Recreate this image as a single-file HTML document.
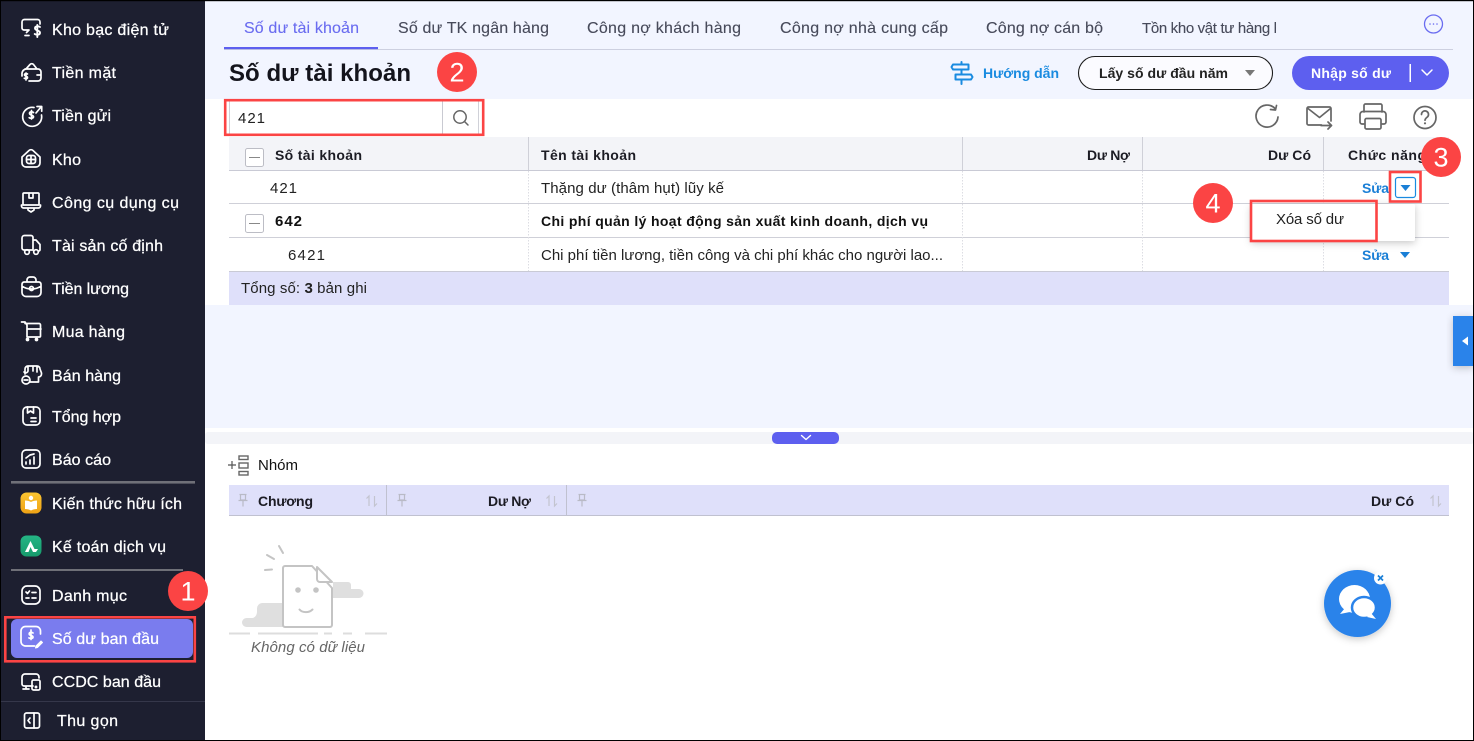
<!DOCTYPE html>
<html lang="vi"><head><meta charset="utf-8"><title>Số dư tài khoản</title>
<style>
html,body{margin:0;padding:0;background:#fff;width:1474px;height:741px;overflow:hidden}
svg{display:block;position:absolute;left:0;top:0}
text{font-family:"Liberation Sans",sans-serif;white-space:pre}
.n{font-size:16px;fill:#fff;stroke:#fff;stroke-width:.25}
.i{fill:none;stroke:#fff;stroke-width:1.7;stroke-linecap:round;stroke-linejoin:round}
.tab{font-size:16px;fill:#474a5a;stroke:#474a5a;stroke-width:.12}
.h{font-size:14px;font-weight:700;fill:#1c1c24}
.c{font-size:15px;fill:#222}
.b{font-size:14px;font-weight:700;fill:#111}
.a{font-size:14px;font-weight:700;fill:#1a7fd6}
.bn{font-size:27px;fill:#fff;font-weight:400;text-anchor:middle}
.g{fill:none;stroke:#666;stroke-width:1.7;stroke-linecap:round;stroke-linejoin:round}
.p{fill:none;stroke:#b9bac6;stroke-width:1.2}
.s{fill:none;stroke:#c3c4cf;stroke-width:1.2}
.d{stroke:#dcdde3;stroke-width:1;stroke-dasharray:1.5 1.5}
</style></head><body>
<svg width="1474" height="741" viewBox="0 0 1474 741" xmlns="http://www.w3.org/2000/svg">
<defs>
<clipPath id="tc"><rect x="1130" y="10" width="146" height="35"/></clipPath>
<filter id="sh" x="-30%" y="-30%" width="160%" height="170%"><feDropShadow dx="0" dy="2" stdDeviation="4" flood-color="#000" flood-opacity=".22"/></filter>
<linearGradient id="yl" x1="0" y1="0" x2="0" y2="1"><stop offset="0" stop-color="#fbc531"/><stop offset="1" stop-color="#eea215"/></linearGradient>
<linearGradient id="gr" x1="0" y1="0" x2="0" y2="1"><stop offset="0" stop-color="#25b585"/><stop offset="1" stop-color="#169a6c"/></linearGradient>
</defs>
<rect width="1474" height="741" fill="#fff"/>

<!-- main background -->
<rect x="205" y="0" width="1269" height="99" fill="#f2f5ff"/>
<rect x="205" y="305" width="1269" height="123" fill="#f2f5ff"/>
<rect x="205" y="432" width="1269" height="12" rx="3" fill="#f3f4f8"/>

<!-- sidebar -->
<rect x="0" y="0" width="205" height="741" fill="#1d1f30"/>
<rect x="11" y="481" width="184" height="2.6" fill="#6f7078"/>
<rect x="11" y="569" width="172" height="2" fill="#6f7078"/>
<rect x="1" y="701" width="204" height="1" fill="#35374a"/>
<rect x="11" y="619" width="182" height="39" rx="6" fill="#7a7cee"/>

<text class="n" x="52" y="35" textLength="117">Kho bạc điện tử</text>
<text class="n" x="52" y="78" textLength="64">Tiền mặt</text>
<text class="n" x="52" y="121" textLength="59">Tiền gửi</text>
<text class="n" x="52" y="165" textLength="29">Kho</text>
<text class="n" x="52" y="208" textLength="127">Công cụ dụng cụ</text>
<text class="n" x="52" y="251" textLength="111">Tài sản cố định</text>
<text class="n" x="52" y="294" textLength="77">Tiền lương</text>
<text class="n" x="52" y="337" textLength="73">Mua hàng</text>
<text class="n" x="52" y="381" textLength="69">Bán hàng</text>
<text class="n" x="52" y="422" textLength="69">Tổng hợp</text>
<text class="n" x="52" y="465" textLength="59">Báo cáo</text>
<text class="n" x="52" y="509" textLength="130">Kiến thức hữu ích</text>
<text class="n" x="52" y="552" textLength="114">Kế toán dịch vụ</text>
<text class="n" x="52" y="601" textLength="75">Danh mục</text>
<text class="n" x="52" y="644" textLength="107">Số dư ban đầu</text>
<text class="n" x="52" y="687" textLength="109">CCDC ban đầu</text>
<text class="n" x="57" y="726" textLength="61">Thu gọn</text>

<!-- sidebar icons -->
<g class="i">
<path d="M40 24v-2a2.500 2.500 0 0 0-2.500-2.500H24.500A2.500 2.500 0 0 0 22 22v6a2 2 0 0 0 2 2h5l-2.500 2.500M25 35.500h4"/>
<path d="M40 27c-1-1-5-1.200-5 1.300 0 2.700 5 1.700 5 4.400 0 2.500-4 2.300-5.300 1.300M37.300 25v12" stroke-width="1.900"/>
<path d="M22 76v-3a5 5 0 0 1 4-4l4-4.500a2.500 2.500 0 0 1 3.500 0L37 69h1a3 3 0 0 1 3 3v6a3 3 0 0 1-3 3h-9M37 75h4M25 69h12"/>
<path d="M27.500 74c-1-.6-3-.6-3 .9s3 1 3 2.600-2.200 1.300-3.200.8M26 73v7"/>
<path d="M34 107.500a9.500 9.500 0 1 0 7.500 7.500M36 113l5-6M37 106.500h4.700v4.700"/>
<path d="M33.500 112.500c-1-1-4-1-4 .9 0 2.200 4 1.300 4 3.400 0 1.800-3 1.800-4.300.9M31.500 110.500v8.500"/>
<path d="M22 157l7-6.500a3 3 0 0 1 4 0l7 6.500v6a4 4 0 0 1-4 4H26a4 4 0 0 1-4-4z"/>
<rect x="26.500" y="155.500" width="9" height="8" rx="2.500"/><path d="M31 155.500v8M26.500 159.500h9"/>
<path d="M24 193h14a1 1 0 0 1 1 1v11H23v-11a1 1 0 0 1 1-1zM21.500 205v1a2 2 0 0 0 2 2h15a2 2 0 0 0 2-2v-1M28 208v2l3 2 3-2v-2M29 193v5h4v-5"/>
<path d="M33 250H24a2 2 0 0 1-2-2v-10a2.500 2.500 0 0 1 2.500-2.500H31a2 2 0 0 1 2 2V250zM33 240h3l4 4.500V250a2 2 0 0 1-1 1"/>
<circle cx="27" cy="252" r="2.300"/><circle cx="36" cy="252" r="2.300"/>
<path d="M24 282h15a2.500 2.500 0 0 1 2 2.500v8a4 4 0 0 1-4 4H26a4 4 0 0 1-4-4v-8a2.500 2.500 0 0 1 2-2.500zM27 282v-2a3 3 0 0 1 3-3h3a3 3 0 0 1 3 3v2M22 286c5 4 14 4 19 0"/>
<circle cx="31.500" cy="288.500" r="2"/>
<path d="M21.500 322h3.500l2 3v12h12.500a1 1 0 0 0 1-1v-11a1.500 1.500 0 0 0-1.500-1.500H25M27 329h14"/>
<circle cx="27.500" cy="339.500" r="1" fill="#fff"/><circle cx="36.500" cy="339.500" r="1" fill="#fff"/>
<path d="M25 374v-5a3 3 0 0 1 3-3h9a3 3 0 0 1 3 3l1.500 4v1a3 3 0 0 1-3 3v5h-9M28 366v5a2.300 2.300 0 0 1-4 1M33 366v5M37 366v6"/>
<circle cx="26" cy="380" r="4"/><path d="M24 380h4"/>
<rect x="23" y="407" width="17" height="18" rx="4"/><path d="M27.500 407v6l3-2 3 2v-6M31 418h5M31 421.500h5"/>
<rect x="22" y="450" width="18" height="18" rx="4"/><path d="M26 464v-2M30 464v-4M34 464v-7M26 458l4-3 4-1"/>
<rect x="22" y="586" width="18" height="18" rx="5"/><path d="M26 592l1.500 1.500 2-2.500M32 592.500h4M26 598h3M32 598h4"/>
<path d="M40.500 634v-3a4.500 4.500 0 0 0-4.500-4.500h-10.500A4.500 4.500 0 0 0 21 631v10.500a4.500 4.500 0 0 0 4.500 4.500h9"/>
<path d="M33 633c-1-1-3.800-1-3.800.9 0 2.100 3.800 1.200 3.800 3.200 0 1.600-2.800 1.600-4 .8M31 630v9.500"/>
<path d="M36 646l5-5 1.500 1.500-5 5-2 .5z" fill="#fff" stroke-width="1"/>
<path d="M33 686h-9a2 2 0 0 1-2-2v-7a3 3 0 0 1 3-3h11a3 3 0 0 1 3 3v1M26 686v3M23 689h6"/>
<rect x="32" y="680" width="8" height="10" rx="1.500"/><circle cx="36" cy="687" r=".6" fill="#fff"/>
<rect x="24.500" y="713" width="15" height="15" rx="2"/><path d="M34 713v15M30 718l-2 2.500 2 2.500"/>
</g>
<!-- coloured sidebar icons -->
<rect x="20.500" y="492.500" width="21" height="21" rx="6" fill="url(#yl)"/>
<path d="M25 500.500c2 0 4.500.5 6 1.500 1.500-1 4-1.500 6-1.500V509c-2 0-4.500.5-6 1.500-1.500-1-4-1.500-6-1.500z" fill="#fff"/>
<circle cx="31" cy="498" r="2.200" fill="#fff"/>
<rect x="20.500" y="535.500" width="21" height="21" rx="6" fill="url(#gr)"/>
<path d="M25 552l5.500-11 5.500 11h-3l-2.500-5-2 5zM34 549h4l-2 3z" fill="#fff"/>

<!-- tabs -->
<text class="tab" x="244" y="33" textLength="115" style="fill:#6a6cf0;stroke:#6a6cf0">Số dư tài khoản</text>
<text class="tab" x="398" y="33" textLength="151">Số dư TK ngân hàng</text>
<text class="tab" x="587" y="33" textLength="154">Công nợ khách hàng</text>
<text class="tab" x="780" y="33" textLength="168">Công nợ nhà cung cấp</text>
<text class="tab" x="986" y="33" textLength="117">Công nợ cán bộ</text>
<g clip-path="url(#tc)"><text class="tab" x="1142" y="33" textLength="140" style="font-size:15px">Tồn kho vật tư hàng h</text></g>
<rect x="224" y="49" width="1229" height="1" fill="#cdd0e0"/>
<rect x="224" y="47" width="154" height="2.200" fill="#5d5fef"/>
<circle cx="1433.500" cy="24" r="9" fill="none" stroke="#6a6cf0" stroke-width="1.300"/>
<circle cx="1430" cy="24" r=".8" fill="#6a6cf0"/><circle cx="1433.500" cy="24" r=".8" fill="#6a6cf0"/><circle cx="1437" cy="24" r=".8" fill="#6a6cf0"/>

<!-- title row -->
<text x="229" y="81" font-size="24" font-weight="700" fill="#14141c" textLength="182">Số dư tài khoản</text>
<g fill="none" stroke="#1a8be0" stroke-width="2" stroke-linejoin="round" stroke-linecap="round">
<path d="M953 64.500h15.500v5H953l-1.500-2.500zM971 74.500h-15.500v5H971l1.500-2.500zM961.500 69.500v5M961.500 79.500v4.500M961.500 62v2.500"/>
</g>
<text x="983" y="78" font-size="14" font-weight="700" fill="#1a8be0" textLength="76">Hướng dẫn</text>
<rect x="1078.500" y="56.500" width="194" height="33" rx="16.500" fill="#fbfbff" stroke="#1c1c1c" stroke-width="1.100"/>
<text x="1099" y="78" font-size="14" font-weight="700" fill="#222" textLength="129">Lấy số dư đầu năm</text>
<path d="M1245 70h10l-5 6z" fill="#777"/>
<rect x="1292" y="56" width="157" height="34" rx="17" fill="#5d5fef"/>
<text x="1311" y="78" font-size="14" font-weight="700" fill="#fff" textLength="80">Nhập số dư</text>
<rect x="1409.500" y="64" width="1.500" height="18" fill="#fff"/>
<path d="M1422 70l5 5 5-5" fill="none" stroke="#fff" stroke-width="1.500" stroke-linecap="round" stroke-linejoin="round"/>

<!-- search -->
<rect x="229.500" y="100.500" width="249" height="34" fill="#fff" stroke="#d0d1d8"/>
<rect x="442" y="101" width="1" height="33" fill="#c9cad2"/>
<text x="238" y="123" font-size="15" fill="#222" textLength="27">421</text>
<circle cx="460" cy="117" r="6.200" fill="none" stroke="#666" stroke-width="1.500"/>
<path d="M464.500 121.500l3.500 3.500" stroke="#666" stroke-width="1.500" stroke-linecap="round"/>
<rect x="225.200" y="100.200" width="258" height="34.600" fill="none" stroke="#fb4444" stroke-width="2.600"/>

<!-- toolbar icons -->
<g class="g">
<path d="M1275 108.500a11 11 0 1 0 3 8.500M1276.500 105.500l-1 4.500-5-.5"/>
<path d="M1331 121v-12.500a1.500 1.500 0 0 0-1.500-1.500h-21a1.500 1.500 0 0 0-1.500 1.500v15a1.500 1.500 0 0 0 1.500 1.500h13M1308 108.500l11.500 9 11-9M1321 125.500h10M1328 122l3.500 3.500-3.500 3.500"/>
<path d="M1364 112v-6.500a1.500 1.500 0 0 1 1.500-1.500h15a1.500 1.500 0 0 1 1.500 1.500v6.500M1364 124h-2a2 2 0 0 1-2-2v-7.500a3 3 0 0 1 3-3h20a3 3 0 0 1 3 3v7.500a2 2 0 0 1-2 2h-2"/>
<rect x="1365" y="118.500" width="16" height="10.500" rx="1.500"/>
<circle cx="1425" cy="117.500" r="11"/>
<path d="M1421.500 114.500a3.500 3.500 0 1 1 5.500 2.800c-1.300 1-2 1.500-2 3"/>
</g>
<circle cx="1425" cy="123.300" r="1.100" fill="#666"/>

<!-- main table -->
<rect x="229" y="137" width="1220" height="33" fill="#f3f4f8"/>
<rect x="229" y="170" width="1220" height="1" fill="#c9cad5"/>
<rect x="229" y="203" width="1220" height="1" fill="#cfd0d8"/>
<rect x="229" y="237" width="1220" height="1" fill="#cfd0d8"/>
<rect x="229" y="271" width="1220" height="34" fill="#dfe0fa"/>
<rect x="229" y="271" width="1220" height="1" fill="#c9cad5"/>
<g fill="#cfd0d8"><rect x="528" y="137" width="1" height="33"/><rect x="962" y="137" width="1" height="33"/><rect x="1142" y="137" width="1" height="33"/><rect x="1323" y="137" width="1" height="33"/></g>
<path class="d" d="M528.500 171V271M962.500 171V271M1142.500 171V271M1323.500 171V271"/>
<rect x="245.500" y="148.500" width="18" height="18" rx="2" fill="#fff" stroke="#bcbdc5"/>
<rect x="249" y="157" width="11" height="1" fill="#888"/>
<rect x="245.500" y="214.500" width="18" height="18" rx="2" fill="#fff" stroke="#bcbdc5"/>
<rect x="249" y="223" width="11" height="1" fill="#888"/>
<text class="h" x="275" y="160" textLength="87">Số tài khoản</text>
<text class="h" x="541" y="160" textLength="95">Tên tài khoản</text>
<text class="h" x="1087" y="160" textLength="43">Dư Nợ</text>
<text class="h" x="1268" y="160" textLength="43">Dư Có</text>
<text class="h" x="1348" y="160" textLength="78">Chức năng</text>

<text class="c" x="270" y="193" textLength="27">421</text>
<text class="c" x="541" y="193" textLength="183">Thặng dư (thâm hụt) lũy kế</text>
<text class="a" x="1362" y="193" textLength="27">Sửa</text>
<rect x="1395.500" y="177.500" width="20" height="20" rx="2.500" fill="#fff" stroke="#1a8be0" stroke-width="1.200"/>
<path d="M1400.500 185h10l-5 6z" fill="#1a7fd6"/>

<text class="b" x="275" y="226" textLength="27" style="font-size:15px">642</text>
<text class="b" x="541" y="226" textLength="387">Chi phí quản lý hoạt động sản xuất kinh doanh, dịch vụ</text>

<text class="c" x="288" y="260" textLength="37">6421</text>
<text class="c" x="541" y="260" textLength="402">Chi phí tiền lương, tiền công và chi phí khác cho người lao...</text>
<text class="a" x="1362" y="260" textLength="27">Sửa</text>
<path d="M1400 252h10l-5 6z" fill="#1a7fd6"/>

<text x="241" y="293" font-size="15" fill="#222" textLength="126">Tổng số: <tspan font-weight="700">3</tspan> bản ghi</text>

<!-- dropdown menu -->
<rect x="1251" y="204" width="164" height="37" rx="2" fill="#fff" filter="url(#sh)"/>
<text x="1276" y="224" font-size="15" fill="#222" textLength="68">Xóa số dư</text>
<rect x="1251" y="201" width="125.500" height="40" fill="none" stroke="#fb4444" stroke-width="2.600"/>
<rect x="1390" y="172" width="30.500" height="29.500" fill="none" stroke="#fb4444" stroke-width="2.600"/>

<!-- side tab, splitter -->
<rect x="1453" y="316" width="21" height="50" fill="#2a83ea" filter="url(#sh)"/>
<path d="M1468 336.500v9l-6-4.500z" fill="#fff"/>
<rect x="772" y="432" width="67" height="12" rx="5" fill="#5d5fef"/>
<path d="M801.500 435.500l4.500 4 4.500-4" fill="none" stroke="#fff" stroke-width="1.400" stroke-linecap="round" stroke-linejoin="round"/>

<!-- group row -->
<path d="M228 465h8M232 461v8" stroke="#555" stroke-width="1.200"/>
<g fill="none" stroke="#666" stroke-width="1.400"><rect x="239" y="456" width="9" height="3.500"/><rect x="239" y="463" width="9" height="5"/><rect x="239" y="471.500" width="9" height="3.500"/></g>
<text x="258" y="470" font-size="15" fill="#111" textLength="40">Nhóm</text>

<!-- lower table -->
<rect x="229" y="485" width="1220" height="30" fill="#dfe0fa"/>
<rect x="229" y="515" width="1220" height="1" fill="#c0c1d0"/>
<rect x="386" y="485" width="1" height="30" fill="#c0c1d0"/>
<rect x="566" y="485" width="1" height="30" fill="#c0c1d0"/>
<text class="h" x="258" y="506" textLength="55">Chương</text>
<text class="h" x="488" y="506" textLength="43">Dư Nợ</text>
<text class="h" x="1371" y="506" textLength="43">Dư Có</text>
<g class="p">
<path d="M239.500 494.500h7M240.500 494.500v5.500h5v-5.500M238.500 500.500h9M243 500.500v6"/>
<path d="M398.500 494.500h7M399.500 494.500v5.500h5v-5.500M397.500 500.500h9M402 500.500v6"/>
<path d="M578.500 494.500h7M579.500 494.500v5.500h5v-5.500M577.500 500.500h9M582 500.500v6"/>
</g>
<g class="s">
<path d="M369 506v-10l-2.500 2.500M374.500 496v10l2.500-2.500"/>
<path d="M549 506v-10l-2.500 2.500M554.500 496v10l2.500-2.500"/>
<path d="M1433 506v-10l-2.500 2.500M1438.500 496v10l2.500-2.500"/>
</g>

<!-- empty state -->
<path d="M333 582h15a3 3 0 0 1 3 3v4h8a4.500 4.500 0 0 1 0 9h-26z" fill="#dfdfdf"/>
<path d="M284 603h-22a5.500 5.500 0 0 0-5 5.500v3c0 3-1.500 6-4.500 6.500h-6a4.500 4.500 0 0 0 0 9H284z" fill="#dfdfdf"/>
<path d="M285 566h27l20 22v37a2 2 0 0 1-2 2h-45a2 2 0 0 1-2-2v-57a2 2 0 0 1 2-2z" fill="#fff" stroke="#c4c4c4" stroke-width="2" stroke-linejoin="round"/>
<path d="M317 567v12a3 3 0 0 0 3 3h12z" fill="#fff" stroke="#c4c4c4" stroke-width="2" stroke-linejoin="round"/>
<circle cx="298" cy="590" r="2.800" fill="#c4c4c4"/><circle cx="316" cy="590" r="2.800" fill="#c4c4c4"/>
<path d="M299.500 609.500c3 3.500 9.500 3.500 13 0" fill="none" stroke="#c4c4c4" stroke-width="2" stroke-linecap="round"/>
<path d="M279 546l4 7M267 555l7 4M265 570l7-.5" stroke="#c4c4c4" stroke-width="2" stroke-linecap="round"/>
<path d="M229 633.500h21M258 633.500h60M324 633.500h8M343 633.500h9M365 633.500h22" stroke="#ddd" stroke-width="2"/>
<text x="251" y="652" font-size="15" font-style="italic" fill="#666" textLength="114">Không có dữ liệu</text>

<!-- chat button -->
<circle cx="1357.500" cy="603.500" r="33.500" fill="#2a83ea" filter="url(#sh)"/>
<ellipse cx="1354.500" cy="599" rx="15.500" ry="14" fill="#fff"/>
<path d="M1345 608l-5 6 10-2z" fill="#fff"/>
<ellipse cx="1364" cy="607.500" rx="12" ry="10.500" fill="#fff" stroke="#2a83ea" stroke-width="2.500"/>
<path d="M1371 613l5 6-9-2z" fill="#fff"/>
<circle cx="1380.500" cy="578" r="6.500" fill="#fff"/>
<path d="M1378 575.500l5 5M1383 575.500l-5 5" stroke="#1a7fd6" stroke-width="1.700"/>

<!-- number badges -->
<g fill="#fb4444"><circle cx="188" cy="591" r="20"/><circle cx="457" cy="72" r="20"/><circle cx="1441" cy="157" r="20"/><circle cx="1213" cy="203" r="20"/></g>
<text class="bn" x="188" y="600.500">1</text><text class="bn" x="457" y="81.500">2</text><text class="bn" x="1441" y="166.500">3</text><text class="bn" x="1213" y="212.500">4</text>
<rect x="5.300" y="617.300" width="189.500" height="44" fill="none" stroke="#fb4444" stroke-width="2.600"/>

<!-- outer border -->
<rect x="0" y="0" width="1474" height="1.200" fill="#000"/>
<rect x="0" y="0" width="1" height="741" fill="#000"/>
<rect x="1473" y="0" width="1" height="741" fill="#000"/>
<rect x="0" y="740" width="1474" height="1" fill="#000"/>
</svg>
</body></html>
